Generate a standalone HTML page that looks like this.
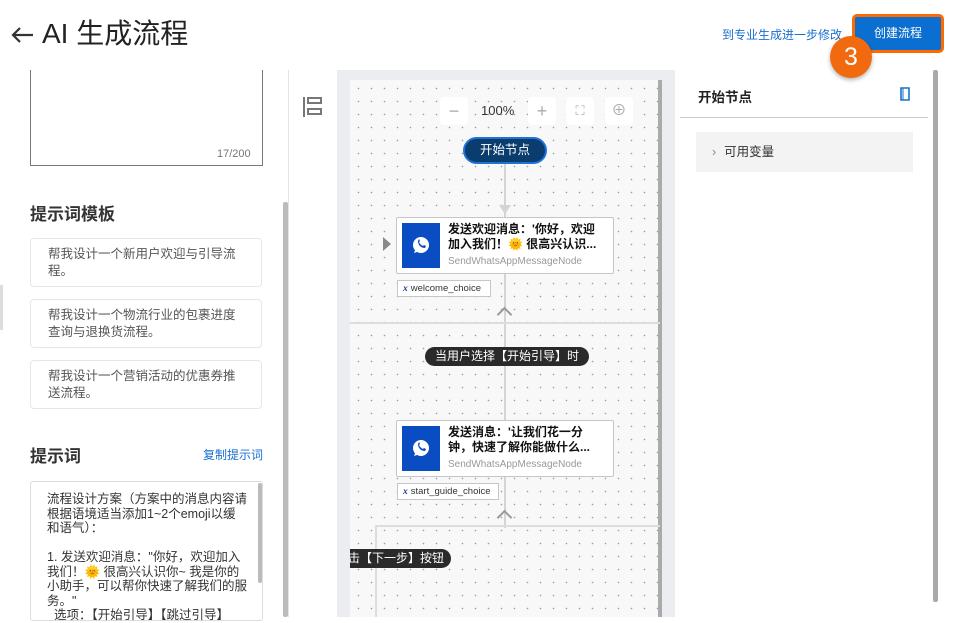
<!DOCTYPE html>
<html><head><meta charset="utf-8"><style>
*{box-sizing:border-box;margin:0;padding:0}
body{width:958px;height:617px;overflow:hidden;background:#fff;font-family:"Liberation Sans","Noto Sans CJK SC",sans-serif;position:relative;color:#222}
.a{position:absolute}
.card{position:absolute;left:30px;width:232px;border:1px solid #e6e6e6;border-radius:4px;font-size:12.5px;color:#555;padding:7px 20px 7px 17px;line-height:17px}
.canvas{left:350px;top:80px;width:310px;height:537px;background-color:#f8f8f9;background-image:radial-gradient(#9aa0aa 0.6px,transparent 1px);background-size:13px 13px;background-position:2px 2px}
.zb{position:absolute;top:97px;width:28px;height:28px;background:#fff;border-radius:4px;color:#aaa;text-align:center;line-height:28px;font-size:18px}
.node{position:absolute;left:396px;width:218px;height:57px;background:#fff;border:1px solid #c4c6cc;border-radius:2px}
.node .ic{position:absolute;left:5px;top:5px;width:38px;height:45px;background:#0a4dc2}
.node .t{position:absolute;left:51px;top:4px;font-size:12px;font-weight:bold;line-height:15px;color:#111;width:152px;white-space:nowrap}
.node .s{position:absolute;left:51px;top:38px;font-size:10px;color:#999}
.tag{position:absolute;left:397px;height:17px;border:1px solid #c4c6cc;background:#fff;font-size:9.5px;color:#333;padding:0 5px;line-height:15px}
.tag i{font-family:"Liberation Serif",serif;color:#1a3b8f;font-weight:bold;margin-right:3px}
.pill{position:absolute;height:19px;background:#2a2a2a;color:#fff;font-size:12px;line-height:19px;border-radius:10px;padding:0 10px;white-space:nowrap}
</style></head><body>
<svg class="a" style="left:10px;top:26px" width="24" height="18"><path d="M23 9H3M10 2L3 9l7 7" fill="none" stroke="#333" stroke-width="2.2"/></svg>
<div class="a" style="left:42px;top:17px;font-size:28px;color:#222;line-height:34px">AI 生成流程</div>
<div class="a" style="left:722px;top:26px;font-size:12px;color:#1a6fd0">到专业生成进一步修改</div>
<div class="a" style="left:852px;top:14px;width:92px;height:39px;border:3px solid #ff6a00;border-radius:5px;background:#0a6fd0;color:#fff;font-size:12px;text-align:center;line-height:33px">创建流程</div>
<div class="a" style="left:830px;top:36px;width:42px;height:42px;border-radius:50%;background:#f26a10;color:#fff;font-size:25px;text-align:center;line-height:42px;box-shadow:0 2px 4px rgba(0,0,0,.3)">3</div>

<!-- left -->
<div class="a" style="left:30px;top:70px;width:233px;height:96px;border:1px solid #777;border-top:none"></div>
<div class="a" style="left:217px;top:148px;font-size:11px;color:#777">17/200</div>
<div class="a" style="left:30px;top:200px;font-size:17px;font-weight:bold;color:#333">提示词模板</div>
<div class="card" style="top:238px;height:49px">帮我设计一个新用户欢迎与引导流程。</div>
<div class="card" style="top:299px;height:49px">帮我设计一个物流行业的包裹进度查询与退换货流程。</div>
<div class="card" style="top:360px;height:49px">帮我设计一个营销活动的优惠券推送流程。</div>
<div class="a" style="left:30px;top:442px;font-size:17px;font-weight:bold;color:#333">提示词</div>
<div class="a" style="left:203px;top:446px;font-size:12px;color:#1a6fd0">复制提示词</div>
<div class="a" style="left:30px;top:481px;width:233px;height:140px;border:1px solid #ddd;border-radius:3px;padding:10px 14px 10px 16px;font-size:12.5px;line-height:14.5px;color:#333">流程设计方案（方案中的消息内容请根据语境适当添加1~2个emoji以缓和语气）：<br><br>1. 发送欢迎消息："你好，欢迎加入我们！🌞 很高兴认识你~ 我是你的小助手，可以帮你快速了解我们的服务。"<br>&nbsp; 选项：【开始引导】【跳过引导】</div>
<div class="a" style="left:258px;top:483px;width:4px;height:100px;background:#bbb;border-radius:2px"></div>
<div class="a" style="left:283px;top:202px;width:5px;height:415px;background:#bbb;border-radius:2px"></div>
<div class="a" style="left:288px;top:70px;width:1px;height:547px;background:#e4e4e4"></div>
<div class="a" style="left:0;top:285px;width:3px;height:45px;background:#ddd"></div>
<svg class="a" style="left:302px;top:95px" width="22" height="24"><g fill="none" stroke="#777" stroke-width="2"><line x1="2" y1="2" x2="2" y2="22"/><rect x="6" y="3" width="13" height="5"/><rect x="6" y="14" width="13" height="5"/></g></svg>

<!-- canvas -->
<div class="a" style="left:337px;top:70px;width:338px;height:547px;background:#ebedf0"></div>
<div class="a canvas"></div>
<div class="a" style="left:658px;top:80px;width:4px;height:537px;background:#aaa"></div>
<div class="zb" style="left:440px">−</div>
<div class="a" style="left:481px;top:103px;font-size:13px;color:#333">100%</div>
<div class="zb" style="left:528px">+</div>
<div class="zb" style="left:566px;font-size:13px">⛶</div>
<div class="zb" style="left:605px;font-size:15px">⊕</div>
<div class="a" style="left:504px;top:163px;width:2px;height:365px;background:#d4d4d4"></div>
<div class="a" style="left:499px;top:205px;border-left:6px solid transparent;border-right:6px solid transparent;border-top:9px solid #d4d4d4"></div>
<div class="a" style="left:463px;top:137px;width:84px;height:27px;border-radius:14px;background:#0b3c6e;border:2px solid #1f72d6;color:#fff;font-size:12.5px;text-align:center;line-height:23px">开始节点</div>
<div class="a" style="left:383px;top:237px;border-top:7px solid transparent;border-bottom:7px solid transparent;border-left:8px solid #888"></div>
<div class="node" style="top:217px"><div class="ic"><svg width="38" height="45"><circle cx="19" cy="22" r="8" fill="#fff"/><path d="M12 30 l2-5 4 3z" fill="#fff"/><path d="M16 18c0 4 3 7 7 7l1-2-2-1-1 1c-2-1-3-2-4-4l1-1-1-2z" fill="#0a4dc2"/></svg></div><div class="t">发送欢迎消息：'你好，欢迎<br>加入我们！🌞 很高兴认识...</div><div class="s">SendWhatsAppMessageNode</div></div>
<div class="tag" style="top:280px;width:94px"><i>x</i>welcome_choice</div>
<div class="a" style="left:499px;top:309px;width:11px;height:11px;border-left:2px solid #999;border-top:2px solid #999;transform:rotate(45deg)"></div>
<div class="a" style="left:350px;top:322px;width:310px;height:2px;background:#ddd"></div>
<div class="pill" style="left:425px;top:347px">当用户选择【开始引导】时</div>
<div class="node" style="top:420px"><div class="ic"><svg width="38" height="45"><circle cx="19" cy="22" r="8" fill="#fff"/><path d="M12 30 l2-5 4 3z" fill="#fff"/><path d="M16 18c0 4 3 7 7 7l1-2-2-1-1 1c-2-1-3-2-4-4l1-1-1-2z" fill="#0a4dc2"/></svg></div><div class="t">发送消息：'让我们花一分<br>钟，快速了解你能做什么...</div><div class="s">SendWhatsAppMessageNode</div></div>
<div class="tag" style="top:483px;width:102px"><i>x</i>start_guide_choice</div>
<div class="a" style="left:499px;top:512px;width:11px;height:11px;border-left:2px solid #999;border-top:2px solid #999;transform:rotate(45deg)"></div>
<div class="a" style="left:375px;top:525px;width:285px;height:2px;background:#ddd"></div>
<div class="a" style="left:375px;top:525px;width:2px;height:92px;background:#ddd"></div>
<div class="a" style="left:350px;top:549px;width:101px;height:19px;overflow:hidden;border-radius:0 10px 10px 0"><div class="pill" style="left:-24px;top:0;border-radius:0 10px 10px 0">点击【下一步】按钮</div></div>

<!-- right -->
<div class="a" style="left:698px;top:86px;font-size:13.5px;font-weight:bold;color:#222">开始节点</div>
<svg class="a" style="left:898px;top:86px" width="14" height="16"><path d="M3 2h8v12H3z M3 2v12" fill="none" stroke="#1a6fd0" stroke-width="1.6"/><path d="M5 2v12" stroke="#1a6fd0" stroke-width="1"/></svg>
<div class="a" style="left:680px;top:117px;width:248px;height:1px;background:#ccc"></div>
<div class="a" style="left:696px;top:132px;width:217px;height:40px;background:#f3f3f3;font-size:12.5px;color:#333;line-height:40px;padding-left:16px"><span style="color:#888;margin-right:8px">›</span>可用变量</div>
<div class="a" style="left:933px;top:70px;width:5px;height:532px;background:#aaa;border-radius:2px"></div>
</body></html>
